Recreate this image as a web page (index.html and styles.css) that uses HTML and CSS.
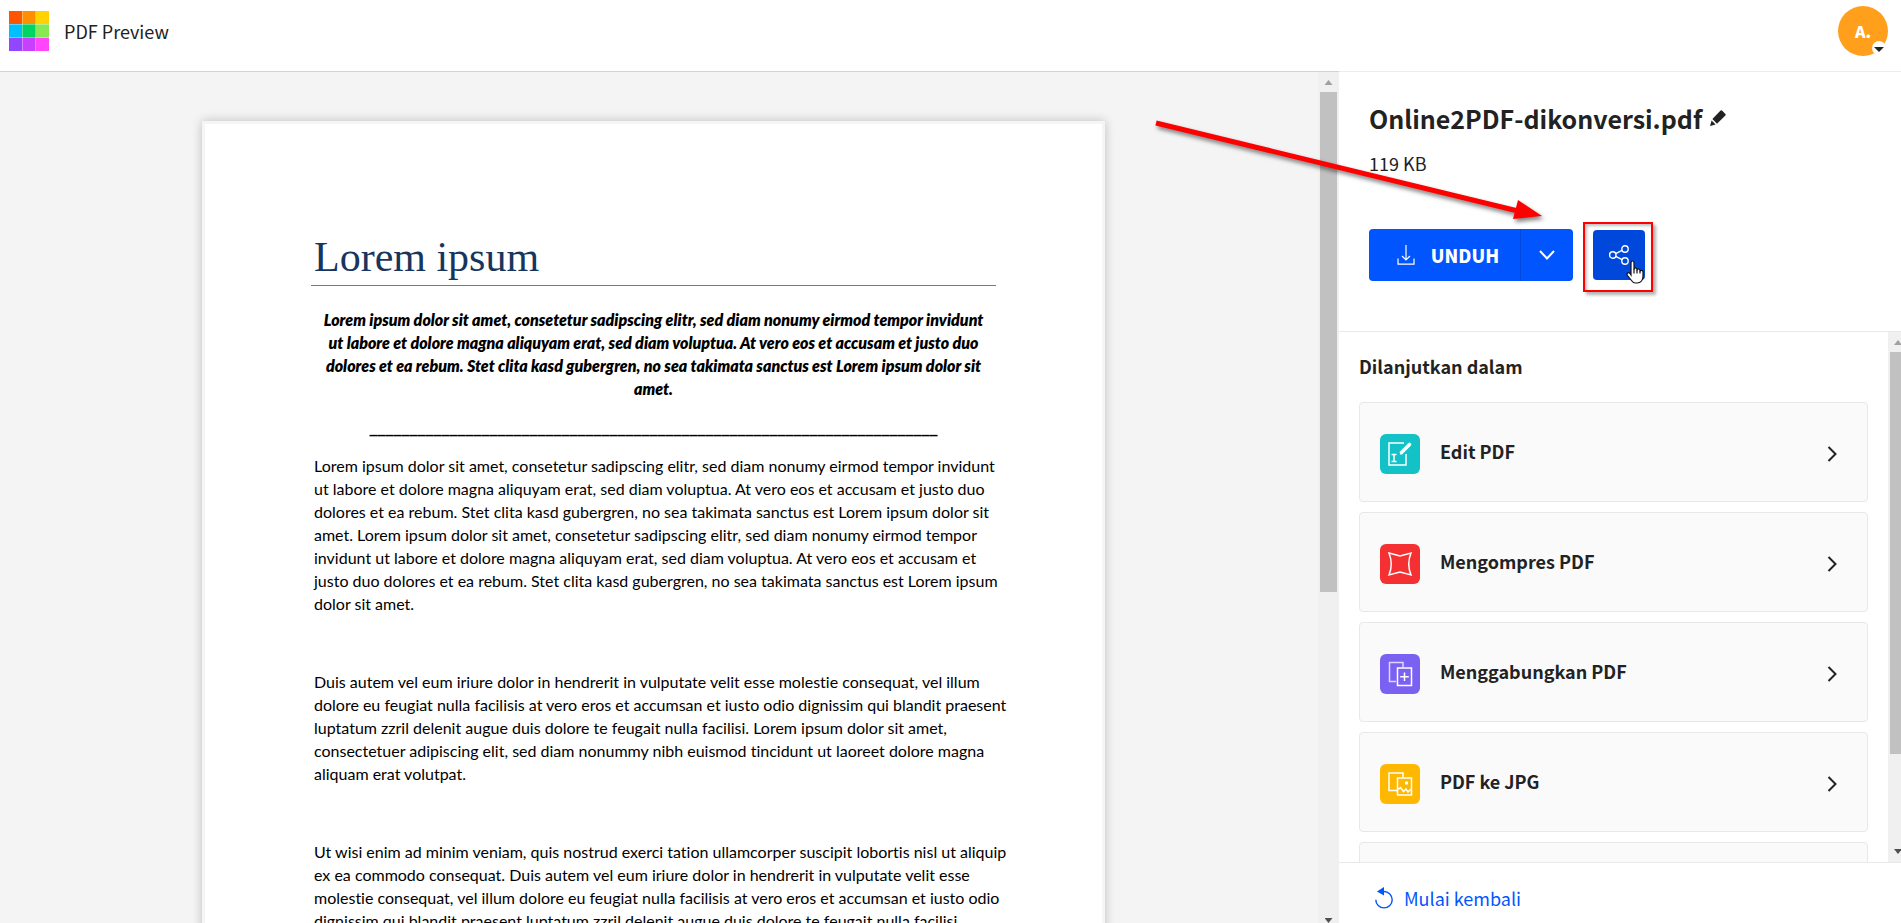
FILE: index.html
```html
<!DOCTYPE html>
<html lang="id">
<head>
<meta charset="utf-8">
<title>PDF Preview</title>
<link rel="stylesheet" href="styles.css">
</head>
<body>
<header class="topbar">
  <svg class="logo" viewBox="0 0 40 40" aria-hidden="true">
    <rect width="40" height="40" fill="#fff"/>
    <rect width="13" height="13" fill="#ff5500"/><rect x="13" width="14" height="13" fill="#ff8f00"/><rect x="27" width="13" height="13" fill="#ffd200"/>
    <rect y="13" width="13" height="14" fill="#00bfff"/><rect x="13" y="13" width="14" height="14" fill="#00d462"/><rect x="27" y="13" width="13" height="14" fill="#86e853"/>
    <rect y="27" width="13" height="13" fill="#9047ff"/><rect x="13" y="27" width="14" height="13" fill="#c840ff"/><rect x="27" y="27" width="13" height="13" fill="#ff46fb"/>
    <path d="M13.5 0v40M26.500 0v40M0 13.500h40M0 26.500h40" stroke="#fff" stroke-opacity=".35"/>
  </svg>
  <h1 class="app-name">PDF Preview</h1>
  <button class="avatar" type="button">A.<span class="avatar-badge"><svg viewBox="0 0 14 14" aria-hidden="true"><path d="M2 6h10l-5 5z" fill="#222"/></svg></span></button>
</header>
<main class="workspace">
  <section class="viewer">
    <div class="canvas">
      <article class="sheet">
        <h2 class="doc-title">Lorem ipsum</h2>
        <p class="lead">Lorem ipsum dolor sit amet, consetetur sadipscing elitr, sed diam nonumy eirmod tempor invidunt<br>ut labore et dolore magna aliquyam erat, sed diam voluptua. At vero eos et accusam et justo duo<br>dolores et ea rebum. Stet clita kasd gubergren, no sea takimata sanctus est Lorem ipsum dolor sit<br>amet.</p>
        <p class="divider">_______________________________________________________________________</p>
        <p class="para">Lorem ipsum dolor sit amet, consetetur sadipscing elitr, sed diam nonumy eirmod tempor invidunt<br>ut labore et dolore magna aliquyam erat, sed diam voluptua. At vero eos et accusam et justo duo<br>dolores et ea rebum. Stet clita kasd gubergren, no sea takimata sanctus est Lorem ipsum dolor sit<br>amet. Lorem ipsum dolor sit amet, consetetur sadipscing elitr, sed diam nonumy eirmod tempor<br>invidunt ut labore et dolore magna aliquyam erat, sed diam voluptua. At vero eos et accusam et<br>justo duo dolores et ea rebum. Stet clita kasd gubergren, no sea takimata sanctus est Lorem ipsum<br>dolor sit amet.</p>
        <p class="para">Duis autem vel eum iriure dolor in hendrerit in vulputate velit esse molestie consequat, vel illum<br>dolore eu feugiat nulla facilisis at vero eros et accumsan et iusto odio dignissim qui blandit praesent<br>luptatum zzril delenit augue duis dolore te feugait nulla facilisi. Lorem ipsum dolor sit amet,<br>consectetuer adipiscing elit, sed diam nonummy nibh euismod tincidunt ut laoreet dolore magna<br>aliquam erat volutpat.</p>
        <p class="para">Ut wisi enim ad minim veniam, quis nostrud exerci tation ullamcorper suscipit lobortis nisl ut aliquip<br>ex ea commodo consequat. Duis autem vel eum iriure dolor in hendrerit in vulputate velit esse<br>molestie consequat, vel illum dolore eu feugiat nulla facilisis at vero eros et accumsan et iusto odio<br>dignissim qui blandit praesent luptatum zzril delenit augue duis dolore te feugait nulla facilisi.</p>
      </article>
    </div>
    <div class="scrollbar" aria-hidden="true">
      <span class="arrow-up"></span><span class="track"><span class="thumb"></span></span><span class="arrow-down"></span>
    </div>
  </section>
  <aside class="panel">
    <div class="file-info">
      <div class="file-row">
        <h2 class="file-name">Online2PDF-dikonversi.pdf</h2>
        <button class="rename" type="button" aria-label="Ubah nama"><svg viewBox="0 0 16 16"><path d="M10.600 .6Q11.300-.1 12 .6L15.400 4Q16 4.700 15.400 5.400L7 13.700 2.400 9zM1.600 10.400l4 4L0 16z" fill="#222"/></svg></button>
      </div>
      <p class="file-size">119 KB</p>
      <div class="actions">
        <div class="download">
          <button class="download-main" type="button"><svg viewBox="0 0 18 20" aria-hidden="true"><path d="M9 0v15M5 11l4 4 4-4M1 13.500V19.200h16V13.500" fill="none" stroke="#fff" stroke-width="1.200"/></svg>UNDUH</button>
          <button class="download-more" type="button" aria-label="Opsi lain"><svg viewBox="0 0 16 10"><path d="M1 1l7 7.500L15 1" fill="none" stroke="#fff" stroke-width="2"/></svg></button>
        </div>
        <div class="highlight">
          <button class="share" type="button" aria-label="Bagikan"><svg viewBox="0 0 20 20"><g fill="none" stroke="#fff" stroke-width="1.400"><circle cx="3.800" cy="10" r="3.200"/><circle cx="16" cy="4" r="3.200"/><circle cx="16" cy="16" r="3.200"/><path d="M6.700 8.600l6.400-3.200M6.700 11.400l6.400 3.200"/></g></svg></button>
          <svg class="cursor" viewBox="0 0 18 24" aria-hidden="true"><path d="M5 15V3q0-2 1.500-2T8 3v6.500q0-1.500 1.500-1.500T11 9.500v1q0-1.500 1.500-1.500T14 10.500v1q0-1.200 1.500-1.200T17 12v4.500q0 2.500-1.500 4.500Q14 23 11 23H9.500Q7 23 5.500 20.500L1.500 15.500Q.5 14 1.500 13T4 13.500z" fill="#fff" stroke="#111" stroke-width="1.200"/><path d="M8 9v4.500M11 10v3.500M14 11v2.500" stroke="#111" stroke-width="1.200"/></svg>
        </div>
      </div>
    </div>
    <div class="next">
      <div class="next-body">
        <h3 class="next-title">Dilanjutkan dalam</h3>
        <a class="tool" href="#"><svg class="tool-icon teal" viewBox="0 0 40 40" aria-hidden="true"><path d="M24 9H9v22h17V20" fill="none" stroke="#fff" stroke-width="1.500"/><path d="M21.500 18.500l8-8" stroke="#fff" stroke-width="3.600" stroke-linecap="round"/><path d="M20 20.500v-3l3 2.500z" fill="#fff"/><path d="M11.500 20.500h5M11.500 27.500h5M14 20.500v7" stroke="#fff" stroke-width="1.500"/></svg><span class="tool-name">Edit PDF</span><svg class="chevron" viewBox="0 0 10 16" aria-hidden="true"><path d="M1.500 1l7 7-7 7"/></svg></a>
        <a class="tool" href="#"><svg class="tool-icon red" viewBox="0 0 40 40" aria-hidden="true"><path d="M9 9l11 3 11-3q-4.500 11 0 22l-11-3-11 3q4.500-11 0-22z" fill="none" stroke="#fff" stroke-width="1.500"/></svg><span class="tool-name">Mengompres PDF</span><svg class="chevron" viewBox="0 0 10 16" aria-hidden="true"><path d="M1.500 1l7 7-7 7"/></svg></a>
        <a class="tool" href="#"><svg class="tool-icon violet" viewBox="0 0 40 40" aria-hidden="true"><path d="M23 13V8.500H9.500v19H16" fill="none" stroke="#fff" stroke-opacity=".75" stroke-width="1.500"/><path d="M17.500 14h14v17.500h-14zM24.500 18.500v8.500M20.200 22.700h8.600" fill="none" stroke="#fff" stroke-width="1.500"/></svg><span class="tool-name">Menggabungkan PDF</span><svg class="chevron" viewBox="0 0 10 16" aria-hidden="true"><path d="M1.500 1l7 7-7 7"/></svg></a>
        <a class="tool" href="#"><svg class="tool-icon amber" viewBox="0 0 40 40" aria-hidden="true"><path d="M23 13V9H9v17.500h8M17.500 14h14v17h-14zM17.500 26l3-2.500 3 4 2.500-2.500 2 3 3-3" fill="none" stroke="#fff" stroke-width="1.500"/><circle cx="26.500" cy="19" r="1.700" fill="#fff"/></svg><span class="tool-name">PDF ke JPG</span><svg class="chevron" viewBox="0 0 10 16" aria-hidden="true"><path d="M1.500 1l7 7-7 7"/></svg></a>
        <a class="tool" href="#" aria-label="Alat lain"></a>
      </div>
      <div class="scrollbar" aria-hidden="true">
        <span class="arrow-up"></span><span class="track"><span class="thumb"></span></span><span class="arrow-down"></span>
      </div>
    </div>
    <footer class="restart-bar">
      <a class="restart" href="#"><svg viewBox="0 0 18 22" aria-hidden="true"><path d="M9 4.500a8.200 8.200 0 1 1-8.200 8.200" fill="none" stroke="#05f" stroke-width="1.400"/><path d="M9 0v8.500L2 4.500z" fill="#05f"/></svg>Mulai kembali</a>
    </footer>
  </aside>
</main>
<svg class="pointer-arrow" viewBox="0 0 390 102" aria-hidden="true"><path d="M2 4L364 92" stroke="#f00" stroke-width="5"/><path d="M364 81L388 97 359 100z" fill="#f00"/></svg>
</body>
</html>
```
FILE: styles.css
```css
* { box-sizing: border-box; }
html, body { height: 100%; }
body {
  margin: 0;
  display: flex;
  flex-direction: column;
  position: relative;
  overflow: hidden;
  background: #fff;
  color: #222;
  font-family: "Noto Sans CJK SC", "Open Sans", sans-serif;
}
h1, h2, h3, p { margin: 0; font-weight: 400; }
button { border: 0; padding: 0; margin: 0; font: inherit; color: inherit; background: none; cursor: pointer; }
a { color: inherit; text-decoration: none; }
svg { display: block; flex: none; }

.topbar {
  flex: none;
  display: flex;
  align-items: center;
  height: 71px;
  padding: 0 13px 9px 9px;
  gap: 15px;
}
.logo { width: 40px; height: 40px; }
.app-name { font-size: 18px; line-height: 24px; }
.avatar {
  position: relative;
  width: 50px;
  height: 50px;
  margin-left: auto;
  border-radius: 50%;
  background: #ff9f1c;
  color: #fff;
  font-size: 16px;
  font-weight: 900;
  line-height: 48px;
}
.avatar-badge {
  position: absolute;
  right: 2px;
  bottom: 1px;
  width: 14px;
  height: 14px;
  border-radius: 50%;
  background: #fff;
}

.workspace { flex: 1; display: flex; min-height: 0; }
.viewer {
  flex: 1;
  display: flex;
  min-width: 0;
  border-top: 1px solid #d3d3d3;
  background: #f4f4f4;
}
.canvas { flex: 1; min-width: 0; overflow: hidden; padding: 49px 11px 0 0; }
.sheet {
  max-width: 903px;
  min-height: 1270px;
  margin: 0 auto;
  padding: 106px 106px 80px;
  border: 3px solid #f5f5f5;
  background: #fff;
  box-shadow: 0 0 10px rgba(0, 0, 0, .22);
  color: #000;
  font-family: Lato, "Open Sans", sans-serif;
  font-size: 16px;
  font-variant-ligatures: none;
  line-height: 23px;
  white-space: nowrap;
}
.doc-title {
  padding: 0 3px 1px;
  border-bottom: 1px solid #4f81bd;
  color: #17365d;
  font-family: "Liberation Serif", serif;
  font-size: 42px;
  line-height: 54px;
}
.lead {
  margin-top: 22px;
  font-weight: 800;
  font-style: italic;
  text-align: center;
}
.divider {
  margin-top: 16px;
  font-family: "DejaVu Sans", sans-serif;
  font-weight: 700;
  text-align: center;
}
.para { padding-left: 3px; margin-top: 15px; }
.para + .para { margin-top: 55px; }

.scrollbar {
  flex: none;
  display: flex;
  flex-direction: column;
  align-items: center;
  width: 21px;
  background: #f0f0f0;
}
.track { flex: 1; width: 17px; }
.thumb { display: block; width: 17px; height: 61%; background: #c1c1c1; }
.arrow-up, .arrow-down { width: 8px; height: 5px; clip-path: polygon(50% 0, 100% 100%, 0 100%); background: #a0a0a0; }
.arrow-up { margin: 8px 0 7px; }
.arrow-down { margin: 7px 0 0; clip-path: polygon(0 0, 100% 0, 50% 100%); background: #505050; }

.panel {
  flex: none;
  display: flex;
  flex-direction: column;
  width: 562px;
  min-height: 0;
  border-top: 1px solid #ececec;
}
.file-info { padding: 26px 30px 39px; border-bottom: 1px solid #e9e9e9; }
.file-row { display: flex; align-items: center; gap: 8px; }
.file-name { font-size: 25px; font-weight: 700; line-height: 40px; }
.rename svg { width: 16px; height: 16px; }
.file-size { margin-top: 13px; font-size: 18px; line-height: 24px; }
.actions { display: flex; align-items: flex-start; gap: 10px; margin-top: 47px; }
.download {
  display: flex;
  width: 204px;
  height: 52px;
  margin-top: 7px;
  overflow: hidden;
  border-radius: 4px;
  background: #05f;
  color: #fff;
}
.download-main {
  flex: 1;
  display: flex;
  align-items: center;
  justify-content: center;
  gap: 16px;
  padding-left: 7px;
  font-size: 18px;
  font-weight: 900;
}
.download-main svg { width: 18px; height: 20px; }
.download-more { display: grid; place-items: center; width: 53px; border-left: 1px solid #0048d9; }
.download-more svg { width: 16px; height: 10px; }
.highlight {
  position: relative;
  padding: 6px 6px 10px 8px;
  border: 2px solid #f00;
  box-shadow: 3px 3px 3px rgba(0, 0, 0, .3), inset 2px 2px 3px rgba(0, 0, 0, .25);
}
.share { display: grid; place-items: center; width: 52px; height: 50px; border-radius: 4px; background: #0048dc; }
.share svg { width: 20px; height: 20px; }
.cursor { position: absolute; left: 41px; top: 36px; width: 18px; height: 24px; }

.next { flex: 1; display: flex; min-height: 0; overflow: hidden; }
.next-body { flex: 1; min-width: 0; overflow: hidden; padding: 20px 20px 0; }
.next-title { margin-bottom: 22px; font-size: 18px; font-weight: 700; line-height: 28px; }
.tool {
  display: flex;
  align-items: center;
  height: 100px;
  margin-bottom: 10px;
  padding: 4px 30px 0 20px;
  border: 1px solid #e8e8e8;
  border-radius: 4px;
  background: #fafafa;
}
.tool-icon { width: 40px; height: 40px; border-radius: 6px; }
.teal { background: #12c2c6; }
.red { background: #f43032; }
.violet { background: #7b61f2; }
.amber { background: #ffb800; }
.tool-name { flex: 1; margin: 0 20px; padding-bottom: 6px; font-size: 18px; font-weight: 700; line-height: 24px; }
.chevron { width: 10px; height: 16px; fill: none; stroke: #222; stroke-width: 2; }
.next .scrollbar { align-items: flex-start; width: 13px; padding-left: 2px; }
.next .track, .next .thumb { width: 11px; }
.next .thumb { height: 82%; }
.next .arrow-up, .next .arrow-down { margin-left: 4px; }
.next .arrow-down { margin-bottom: 8px; }
.restart-bar { padding: 23px 36px 13px; border-top: 1px solid #e9e9e9; }
.restart { display: flex; align-items: center; gap: 11px; width: max-content; color: #05f; font-size: 18px; line-height: 24px; }
.restart svg { width: 18px; height: 22px; }

.pointer-arrow {
  position: absolute;
  right: 357px;
  top: 119px;
  width: 390px;
  height: 102px;
  overflow: visible;
  filter: drop-shadow(2px 3px 2px rgba(0, 0, 0, .5));
  pointer-events: none;
}
```
